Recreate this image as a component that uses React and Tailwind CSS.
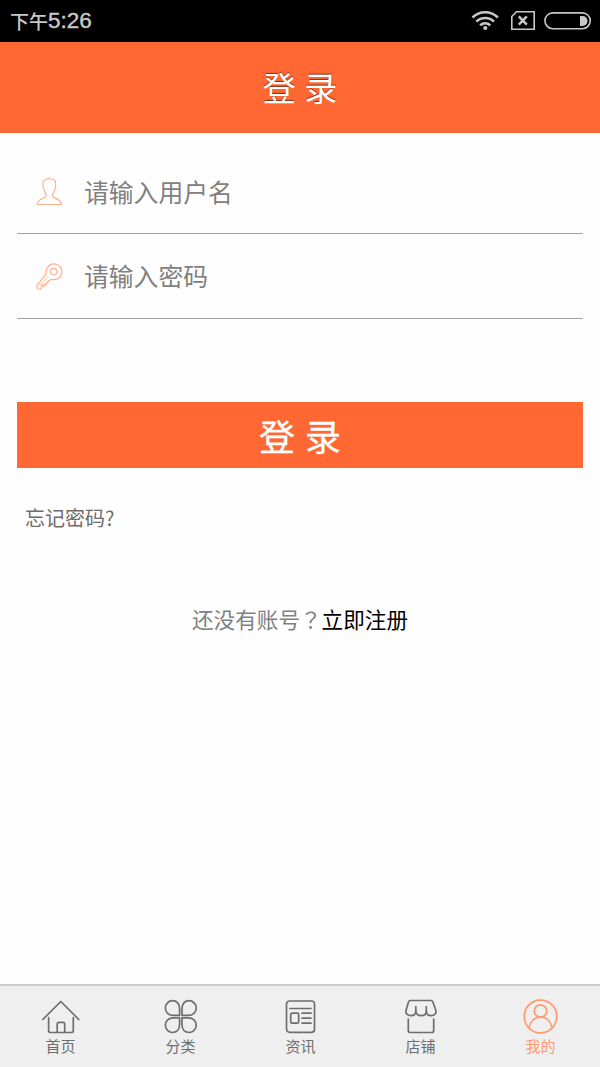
import React, { useState } from "react";

const StatusBar = () => (
  <div className="flex h-[42px] shrink-0 items-center justify-between bg-black pl-[10px] pr-[7px] text-[#c8c8c8]">
    <div className="flex items-center">
      <span className="text-[19px] leading-[40px] font-medium">下午</span>
      <span className="font-['Liberation_Sans'] text-[22.5px] leading-[42px] [-webkit-text-stroke:0.4px_#c8c8c8]">5:26</span>
    </div>
    <svg width="122" height="24" viewBox="471 9 122 24" fill="none" stroke="currentColor">
      <path strokeWidth="2.6" d="M472.500 17.500a18 18 0 0 1 25.400 0M476.400 21.600a12.400 12.400 0 0 1 17.600 0M480.200 25.400a7 7 0 0 1 10 0" />
      <circle cx="485.300" cy="28" r="2.100" fill="currentColor" stroke="none" />
      <path strokeWidth="1.600" d="M516.500 11.800h17.700v17.500h-22.400V16.500z" />
      <path strokeWidth="2.400" d="M518.800 16.300l8 8.400M526.800 16.300l-8 8.400" />
      <rect x="544.900" y="12.900" width="45.400" height="15.800" rx="7.900" strokeWidth="1.600" />
      <path fill="currentColor" stroke="none" d="M580 16h2.500a4.800 4.800 0 0 1 0 10H580z" />
    </svg>
  </div>
);

const UserIcon = () => (
  <svg width="28" height="30" viewBox="36 177 28 30" fill="none" stroke="#ffb08f" strokeWidth="1.2" strokeLinejoin="round">
    <path d="M45.500 179.800c1.500-1.300 4-1.300 5.500-.8 3.700.2 5 2 4.600 5.500.5 2.500 0 3.800-.8 4.800-.4 2.500-1.200 3.700-2 4.700v2.500c.5 2.200 8.700 2 8.700 8h-24.300c0-6.200 8.200-5.800 8.800-8v-2.500c-1-1-1.700-2.700-2-4.700-1.300-1.500-1.300-3.300-.9-4.800-.3-2.200.4-4 2.400-4.700z" />
  </svg>
);

const KeyIcon = () => (
  <svg width="28" height="30" viewBox="36 261 28 30" fill="none" stroke="#ffb08f" strokeWidth="1.2" strokeLinejoin="round">
    <circle cx="53.700" cy="271.600" r="3.200" />
    <path d="M46.300 273.700a7.900 7.900 0 1 1 5 5.500l-2 1.700-1.300-.1v1.800l-1.700.2v1.700l-1.700-.1-.1 1.700-1.700-.1v-1.500l-1.600 1.500.5 1.700-1.500 1.300h-2.500l-.7-1.500v-2.200z" />
    <path d="M38.500 286l9.500-9.300" strokeWidth="0.800" />
  </svg>
);

const tabs = [
  {
    label: "首页",
    icon: (
      <>
        <path d="M2.800 20.500L20.800 2.500 38.800 20.500" />
        <path d="M8.600 18.500V31.500a2 2 0 0 0 2 2H31.300a2 2 0 0 0 2-2V18.500" />
        <path d="M17.200 33V25a1.600 1.600 0 0 1 1.600-1.600h4.300a1.600 1.600 0 0 1 1.600 1.600v8" />
      </>
    ),
  },
  {
    label: "分类",
    icon: (
      <>
        <path d="M19.600 16.400V9.600c0-4.700-2.800-7.900-7-7.900a7.200 7.200 0 0 0-7.200 7.200c0 4.300 3.200 7.500 8 7.500z" />
        <path d="M22 16.400V9.600c0-4.700 2.800-7.900 7-7.900a7.200 7.200 0 0 1 7.200 7.200c0 4.300-3.200 7.500-8 7.500z" />
        <path d="M19.600 18.800v6.800c0 4.700-2.800 7.900-7 7.900a7.200 7.200 0 0 1-7.200-7.200c0-4.300 3.200-7.500 8-7.500z" />
        <path d="M22 18.800v6.800c0 4.700 2.800 7.900 7 7.900a7.200 7.200 0 0 0 7.200-7.200c0-4.300-3.200-7.500-8-7.500z" />
      </>
    ),
  },
  {
    label: "资讯",
    icon: (
      <>
        <rect x="6.500" y="2" width="28" height="31.300" rx="3" />
        <path d="M10 9.500h21M22 14.200h9M22 19.200h9M22 24.200h9" />
        <rect x="10.700" y="14.200" width="8" height="10" rx="1.500" />
      </>
    ),
  },
  {
    label: "店铺",
    icon: (
      <>
        <path d="M10.500 1.500h20.400c1.200 0 1.700.6 2 1.500l3 8.500c.7 2.900-1.500 5.200-4.500 5.200-3 0-5.100-1.500-5.100-4.700 0 3-2.300 4.700-5.200 4.700s-5.300-1.700-5.300-4.700c0 3.200-2.200 4.700-5 4.700-3.300 0-5.500-2.400-4.800-5.200L8.500 3c.3-.9.900-1.500 2-1.500z" />
        <path d="M15.800 12.500V7.500M26.300 12.500V7.500" />
        <path d="M8.300 20v11.500a2 2 0 0 0 2 2h21.400a2 2 0 0 0 2-2V20" />
      </>
    ),
  },
  {
    label: "我的",
    icon: (
      <>
        <circle cx="20.500" cy="17.500" r="16.300" />
        <circle cx="20.500" cy="12" r="6.200" />
        <path d="M8.900 28.800c1.400-6.200 5.600-10.600 11.600-10.600s10.200 4.400 11.600 10.600" />
      </>
    ),
  },
];

const TabBar = ({ active, onChange }) => (
  <nav className="grid h-[83px] shrink-0 grid-cols-5 border-t-2 border-[#cbcbcb] bg-[#efefef]">
    {tabs.map((tab, index) => (
      <button
        key={tab.label}
        onClick={() => onChange(index)}
        className={
          index === active
            ? "flex flex-col items-center pt-[13px] text-[#ff9b6e]"
            : "flex flex-col items-center pt-[13px] text-[#6e6e6e]"
        }
      >
        <svg width="41" height="36" viewBox="0 0 41 36" fill="none" stroke="currentColor" strokeWidth="1.7" strokeLinecap="round" strokeLinejoin="round">
          {tab.icon}
        </svg>
        <span className="pl-px text-[15px] leading-[22px]">{tab.label}</span>
      </button>
    ))}
  </nav>
);

const Field = ({ icon, ...props }) => (
  <label className="flex h-[84.5px] items-center border-b border-[#a0a0a0] pl-[19px]">
    {icon}
    <input
      {...props}
      className="mb-[2px] ml-[20px] w-[440px] text-[24.8px] leading-[36px] text-[#333] outline-none placeholder:text-[#808080]"
    />
  </label>
);

const App = () => {
  const [active, setActive] = useState(4);
  const [form, setForm] = useState({ user: "", password: "" });

  return (
    <div className="flex h-[1067px] w-[600px] flex-col overflow-hidden bg-[#fefefe] font-['Noto_Sans_CJK_SC',sans-serif]">
      <StatusBar />
      <header className="flex h-[91px] shrink-0 items-center justify-center bg-[#ff6832] pb-[2px]">
        <h1 className="text-[33px] leading-[48px] text-white [text-shadow:0_-1px_1px_rgba(0,0,0,0.5)] [word-spacing:1px]">登 录</h1>
      </header>

      <main className="flex flex-1 flex-col px-[17px] pt-[16.8px]">
        <form onSubmit={(e) => e.preventDefault()}>
          <Field
            icon={<UserIcon />}
            type="text"
            placeholder="请输入用户名"
            value={form.user}
            onChange={(e) => setForm({ ...form, user: e.target.value })}
          />
          <Field
            icon={<KeyIcon />}
            type="password"
            placeholder="请输入密码"
            value={form.password}
            onChange={(e) => setForm({ ...form, password: e.target.value })}
          />
          <button className="mt-[83.2px] flex h-[66px] w-full items-center justify-center bg-[#ff6832] text-[36px] leading-[54px] text-white [-webkit-text-stroke:0.3px_white] [word-spacing:2px]">
            登 录
          </button>
        </form>
        <a className="mt-[35px] ml-2 text-[20px] leading-[30px] text-[#6d6d6d]">忘记密码?</a>
        <p className="mt-[70px] text-center text-[21.6px] leading-[32px] text-[#808080]">
          还没有账号<span className="font-['Noto_Sans_CJK_TC',sans-serif]" lang="zh-Hant">？</span>
          <a className="text-black">立即注册</a>
        </p>
      </main>

      <TabBar active={active} onChange={setActive} />
    </div>
  );
};

export default App;
